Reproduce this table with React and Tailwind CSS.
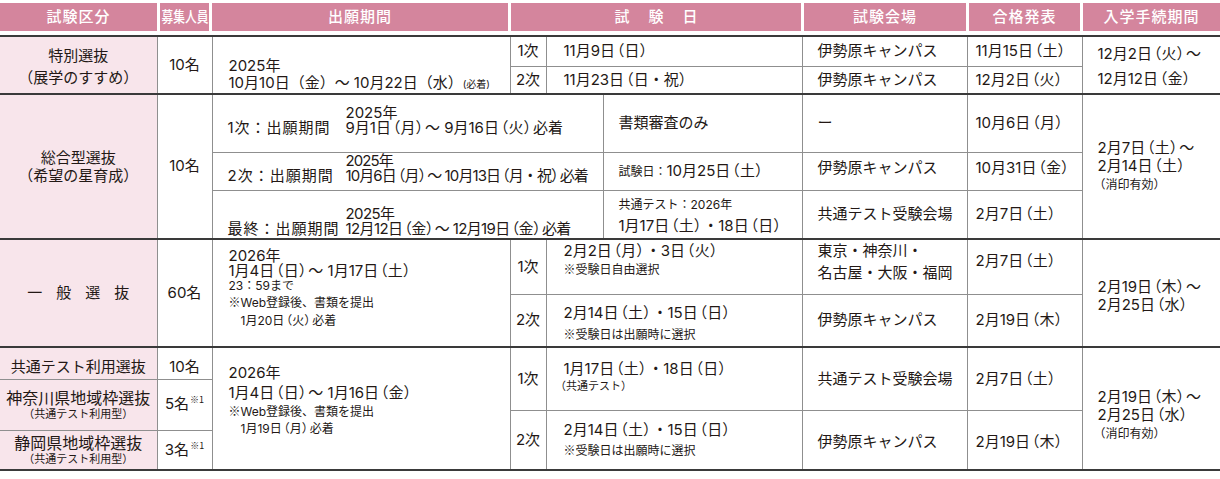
import React from 'react';

// full-width brackets set half-width (halt) so dates read tighter, like the print
const T = ({ children }) =>
  String(children)
    .split(/([（）※])/)
    .map((p, i) =>
      p === '（' ? (
        <span key={i} className="ml-[2px] [font-feature-settings:'halt']">（</span>
      ) : p === '）' ? (
        <span key={i} className="mr-[2px] [font-feature-settings:'halt']">）</span>
      ) : p === '※' ? (
        <span key={i} className="font-['Noto_Sans_CJK_JP',sans-serif]">※</span>
      ) : (
        p
      )
    );

const td = 'border border-[#8f8f8f] p-0 align-middle';
const lab = 'border border-[#8f8f8f] border-l-0 p-0 align-middle bg-[#f8e5eb] text-center';
const end = 'border border-[#8f8f8f] border-r-0 p-0 align-middle';
const head = 'bg-[#d4859d] flex items-center justify-center';

const Sup = () => (
  <span className="relative -top-[6px] ml-[1px] text-[9px] font-['Noto_Sans_CJK_JP',sans-serif]">※1</span>
);

export default function App() {
  return (
    <div className="w-[1220px] h-[479px] overflow-hidden bg-white pt-[3px] text-[15px] text-[#231815] font-['Inter','Noto_Sans_CJK_JP',sans-serif]">
      {/* Header */}
      <div className="flex h-[28px] gap-[3px] text-[15px] font-medium tracking-[1px] text-white">
        <div className={head + ' w-[157px]'}>試験区分</div>
        <div className={head + ' w-[49px] tracking-normal'}>
          <span className="inline-block scale-x-[0.78] whitespace-nowrap">募集人員</span>
        </div>
        <div className={head + ' w-[296px]'}>出願期間</div>
        <div className={head + ' w-[290px] tracking-[19px] pl-[19px]'}>試験日</div>
        <div className={head + ' w-[162px]'}>試験会場</div>
        <div className={head + ' w-[111px]'}>合格発表</div>
        <div className={head + ' w-[137px]'}>入学手続期間</div>
      </div>

      <table className="mt-[4px] w-[1220px] table-fixed border-collapse whitespace-nowrap">
        <colgroup>
          <col className="w-[157px]" />
          <col className="w-[55px]" />
          <col className="w-[298px]" />
          <col className="w-[36px]" />
          <col className="w-[57px]" />
          <col className="w-[199px]" />
          <col className="w-[165px]" />
          <col className="w-[115px]" />
          <col className="w-[138px]" />
        </colgroup>

        {/* 特別選抜 */}
        <tbody className="border-t-2 border-t-[#3a3a3a]">
          <tr className="h-[29px]">
            <td rowSpan={2} className={lab}>
              <div className="pt-[3px] leading-[22px]">
                特別選抜
                <br />
                <T>（展学のすすめ）</T>
              </div>
            </td>
            <td rowSpan={2} className={td + ' text-center'}>10名</td>
            <td rowSpan={2} className={td + ' align-top'}>
              <div className="pl-[16px] pt-[20px] leading-[17px]">
                2025年
                <br />
                10月10日（金）～ 10月22日（水）<span className="text-[10px]">(必着)</span>
              </div>
            </td>
            <td className={td + ' text-center'}>1次</td>
            <td colSpan={2} className={td}>
              <div className="pl-[17px]"><T>11月9日（日）</T></div>
            </td>
            <td className={td}><div className="pl-[15px]">伊勢原キャンパス</div></td>
            <td className={td}><div className="pl-[8px]"><T>11月15日（土）</T></div></td>
            <td rowSpan={2} className={end}>
              <div className="pl-[15px] pt-[2px] leading-[25px]">
                <T>12月2日（火）～</T>
                <br />
                <T>12月12日（金）</T>
              </div>
            </td>
          </tr>
          <tr className="h-[26px]">
            <td className={td + ' text-center'}>2次</td>
            <td colSpan={2} className={td}>
              <div className="pl-[17px]"><T>11月23日（日・祝）</T></div>
            </td>
            <td className={td}><div className="pl-[15px]">伊勢原キャンパス</div></td>
            <td className={td}><div className="pl-[8px]"><T>12月2日（火）</T></div></td>
          </tr>
        </tbody>

        {/* 総合型選抜 */}
        <tbody className="border-t-2 border-t-[#3a3a3a]">
          <tr className="h-[58px]">
            <td rowSpan={3} className={lab}>
              <div className="leading-[18px]">
                総合型選抜
                <br />
                <T>（希望の星育成）</T>
              </div>
            </td>
            <td rowSpan={3} className={td + ' text-center'}>10名</td>
            <td colSpan={3} className={td + ' align-top'}>
              <div className="flex items-end pl-[15px] pt-[10px] leading-[15px]">
                <div className="w-[118px] shrink-0 tracking-[1px]">1次：出願期間</div>
                <div className="shrink-0">
                  2025年
                  <br />
                  <T>9月1日（月）～ 9月16日（火）必着</T>
                </div>
              </div>
            </td>
            <td className={td}><div className="pl-[15px]">書類審査のみ</div></td>
            <td className={td}><div className="pl-[15px]">ー</div></td>
            <td className={td}><div className="pl-[8px]"><T>10月6日（月）</T></div></td>
            <td rowSpan={3} className={end}>
              <div className="pl-[15px] leading-[18px]">
                <T>2月7日（土）～</T>
                <br />
                <T>2月14日（土）</T>
                <br />
                <span className="text-[12px]"><T>（消印有効）</T></span>
              </div>
            </td>
          </tr>
          <tr className="h-[38px]">
            <td colSpan={3} className={td + ' align-top'}>
              <div className="flex items-end pl-[15px] leading-[15px]">
                <div className="w-[118px] shrink-0 tracking-[1px]">2次：出願期間</div>
                <div className="shrink-0 tracking-[-0.9px]">
                  2025年
                  <br />
                  <T>10月6日（月）～ 10月13日（月・祝）必着</T>
                </div>
              </div>
            </td>
            <td className={td}>
              <div className="pl-[15px]">
                <span className="text-[12px]">試験日：</span>
                <T>10月25日（土）</T>
              </div>
            </td>
            <td className={td}><div className="-mt-[6px] pl-[15px]">伊勢原キャンパス</div></td>
            <td className={td}><div className="-mt-[6px] pl-[8px]"><T>10月31日（金）</T></div></td>
          </tr>
          <tr className="h-[49px]">
            <td colSpan={3} className={td + ' align-top'}>
              <div className="flex items-end pl-[15px] pt-[15px] leading-[15px]">
                <div className="w-[118px] shrink-0 tracking-[1px]">最終：出願期間</div>
                <div className="shrink-0 tracking-[-0.6px]">
                  2025年
                  <br />
                  <T>12月12日（金）～ 12月19日（金）必着</T>
                </div>
              </div>
            </td>
            <td className={td + ' align-top'}>
              <div className="pl-[15px] pt-[5px]">
                <div className="text-[12px] leading-[18px]">共通テスト：2026年</div>
                <div className="leading-[24px]"><T>1月17日（土）・18日（日）</T></div>
              </div>
            </td>
            <td className={td}><div className="pl-[15px]">共通テスト受験会場</div></td>
            <td className={td}><div className="pl-[8px]"><T>2月7日（土）</T></div></td>
          </tr>
        </tbody>

        {/* 一般選抜 */}
        <tbody className="border-t-2 border-t-[#3a3a3a]">
          <tr className="h-[55px]">
            <td rowSpan={2} className={lab}>
              <div className="pl-[14px] tracking-[14px]">一般選抜</div>
            </td>
            <td rowSpan={2} className={td + ' text-center'}>60名</td>
            <td rowSpan={2} className={td + ' align-top'}>
              <div className="pl-[16px] pt-[8px]">
                <div className="leading-[15px]">2026年</div>
                <div className="leading-[16px]"><T>1月4日（日）～ 1月17日（土）</T></div>
                <div className="text-[12px] leading-[14px]">23：59まで</div>
                <div className="text-[12px] leading-[18px]"><T>※Web登録後、書類を提出</T></div>
                <div className="pl-[12px] text-[12px] leading-[17px]"><T>1月20日（火）必着</T></div>
              </div>
            </td>
            <td className={td + ' text-center'}>1次</td>
            <td colSpan={2} className={td + ' align-top'}>
              <div className="pl-[17px] pt-[1px]">
                <div className="leading-[20px]"><T>2月2日（月）・3日（火）</T></div>
                <div className="text-[12px] leading-[16px]"><T>※受験日自由選択</T></div>
              </div>
            </td>
            <td className={td + ' align-top'}>
              <div className="pl-[15px] leading-[22px]">
                東京・神奈川・
                <br />
                名古屋・大阪・福岡
              </div>
            </td>
            <td className={td}><div className="-mt-[12px] pl-[8px]"><T>2月7日（土）</T></div></td>
            <td rowSpan={2} className={end}>
              <div className="pl-[15px] pt-[6px] leading-[18px]">
                <T>2月19日（木）～</T>
                <br />
                <T>2月25日（水）</T>
              </div>
            </td>
          </tr>
          <tr className="h-[53px]">
            <td className={td + ' text-center'}>2次</td>
            <td colSpan={2} className={td + ' align-top'}>
              <div className="pl-[17px] pt-[7px]">
                <div className="leading-[22px]"><T>2月14日（土）・15日（日）</T></div>
                <div className="text-[12px] leading-[20px]"><T>※受験日は出願時に選択</T></div>
              </div>
            </td>
            <td className={td}><div className="pl-[15px]">伊勢原キャンパス</div></td>
            <td className={td}><div className="pl-[8px]"><T>2月19日（木）</T></div></td>
          </tr>
        </tbody>

        {/* 共通テスト利用 */}
        <tbody className="border-y-2 border-y-[#3a3a3a]">
          <tr className="h-[32px]">
            <td className={lab}><div className="pt-[8px] leading-[20px]">共通テスト利用選抜</div></td>
            <td className={td + ' text-center'}><div className="pt-[8px] leading-[20px]">10名</div></td>
            <td rowSpan={4} className={td + ' align-top'}>
              <div className="pl-[16px] pt-[15px]">
                <div className="leading-[20px]">2026年</div>
                <div className="leading-[20px]"><T>1月4日（日）～ 1月16日（金）</T></div>
                <div className="text-[12px] leading-[16px]"><T>※Web登録後、書類を提出</T></div>
                <div className="pl-[12px] text-[12px] leading-[17px]"><T>1月19日（月）必着</T></div>
              </div>
            </td>
            <td rowSpan={2} className={td + ' text-center'}>1次</td>
            <td rowSpan={2} colSpan={2} className={td}>
              <div className="-mt-[5px] pl-[17px]">
                <div className="leading-[20px]"><T>1月17日（土）・18日（日）</T></div>
                <div className="-ml-[5px] text-[11px] leading-[14px]"><T>（共通テスト）</T></div>
              </div>
            </td>
            <td rowSpan={2} className={td}><div className="pl-[15px]">共通テスト受験会場</div></td>
            <td rowSpan={2} className={td}><div className="pl-[8px]"><T>2月7日（土）</T></div></td>
            <td rowSpan={4} className={end}>
              <div className="pl-[15px] pt-[14px] leading-[18px]">
                <T>2月19日（木）～</T>
                <br />
                <T>2月25日（水）</T>
                <br />
                <span className="text-[12px]"><T>（消印有効）</T></span>
              </div>
            </td>
          </tr>
          <tr className="h-[31px]">
            <td rowSpan={2} className={lab}>
              <div className="text-[16px] leading-[18px]">神奈川県地域枠選抜</div>
              <div className="text-[11px] leading-[14px]"><T>（共通テスト利用型）</T></div>
            </td>
            <td rowSpan={2} className={td + ' text-center'}>5名<Sup /></td>
          </tr>
          <tr className="h-[20px]">
            <td rowSpan={2} className={td + ' text-center'}>2次</td>
            <td rowSpan={2} colSpan={2} className={td}>
              <div className="pl-[17px]">
                <div className="leading-[22px]"><T>2月14日（土）・15日（日）</T></div>
                <div className="text-[12px] leading-[18px]"><T>※受験日は出願時に選択</T></div>
              </div>
            </td>
            <td rowSpan={2} className={td}><div className="pl-[15px] pt-[4px]">伊勢原キャンパス</div></td>
            <td rowSpan={2} className={td}><div className="pl-[8px] pt-[4px]"><T>2月19日（木）</T></div></td>
          </tr>
          <tr className="h-[40px]">
            <td className={lab}>
              <div className="text-[16px] leading-[18px]">静岡県地域枠選抜</div>
              <div className="text-[11px] leading-[14px]"><T>（共通テスト利用型）</T></div>
            </td>
            <td className={td + ' text-center'}>3名<Sup /></td>
          </tr>
        </tbody>
      </table>
    </div>
  );
}
